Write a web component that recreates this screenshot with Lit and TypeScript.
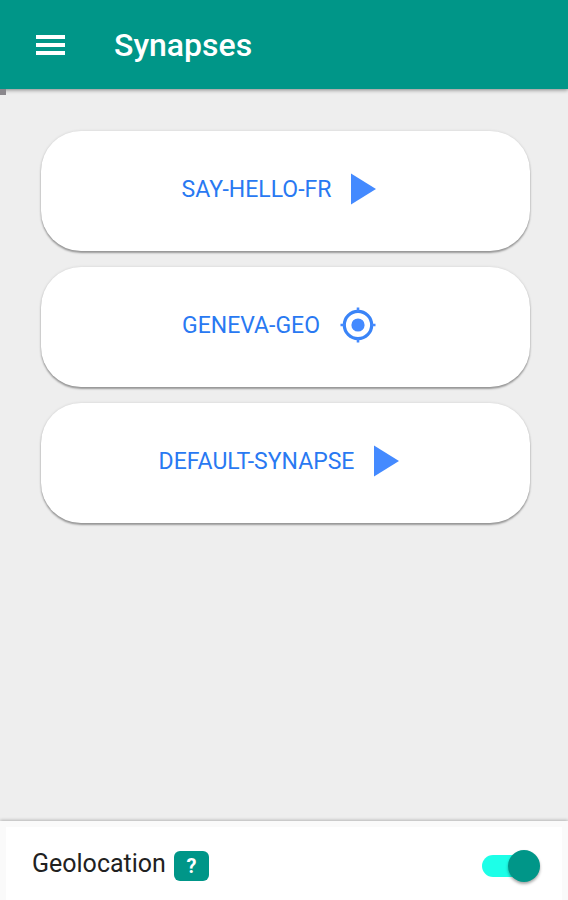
import { LitElement, html, css } from "lit";
import { customElement, state } from "lit/decorators.js";

type Synapse = { name: string; kind: "play" | "locate" };

@customElement("app-root")
export class AppRoot extends LitElement {
  static styles = css`
    :host {
      display: flex;
      flex-direction: column;
      min-height: 100vh;
      background: #eeeeee;
      font-family: Roboto, "Liberation Sans", sans-serif;
      color: #212121;
    }
    button {
      border: 0;
      margin: 0;
      font: inherit;
      cursor: pointer;
    }
    svg {
      display: block;
      fill: currentColor;
    }
    .bar {
      display: flex;
      align-items: center;
      gap: 48px;
      height: 89px;
      padding: 0 36px;
      background: #009688;
      color: #ffffff;
      box-shadow: 0 1px 4px rgba(0, 0, 0, 0.45);
      z-index: 1;
    }
    .menu {
      padding: 0;
      background: none;
      color: inherit;
    }
    h1 {
      margin: 0;
      font-size: 32px;
      line-height: 40px;
      font-weight: 500;
    }
    .handle {
      width: 6px;
      height: 6px;
      background: #8a878c;
      z-index: 2;
    }
    main {
      flex: 1;
    }
    .list {
      display: flex;
      flex-direction: column;
      gap: 16px;
      margin: 0;
      padding: 36px 38px 36px 41px;
      list-style: none;
    }
    .card {
      display: flex;
      align-items: center;
      justify-content: center;
      gap: 20px;
      width: 100%;
      height: 120px;
      padding: 0 13px 4px 0;
      border-radius: 40px;
      background: #ffffff;
      color: #2979f2;
      box-shadow: 0 2px 2px rgba(0, 0, 0, 0.34), 0 0 3px rgba(0, 0, 0, 0.12);
      font-size: 23px;
      line-height: 30px;
    }
    .card span {
      padding-top: 2px;
    }
    .card svg {
      fill: #448aff;
    }
    .footer {
      padding: 6px 6px 0;
      background: #fafafa;
      box-shadow: 0 -1px 3px rgba(0, 0, 0, 0.24);
    }
    .row {
      display: flex;
      align-items: center;
      justify-content: space-between;
      height: 73px;
      padding: 0 22px 0 26px;
      background: #ffffff;
    }
    .name {
      display: flex;
      align-items: center;
      gap: 8px;
      font-size: 25px;
      line-height: 32px;
    }
    .help {
      width: 35px;
      height: 30px;
      margin-top: 5px;
      padding: 0;
      border-radius: 6px;
      background: #009688;
      color: #ffffff;
      font-size: 20px;
      line-height: 28px;
      font-weight: 700;
    }
    .switch {
      appearance: none;
      display: flex;
      align-items: center;
      width: 58px;
      height: 22px;
      margin: 5px 0 0;
      border-radius: 11px;
      background: linear-gradient(#bdbdbd, #bdbdbd) 0 0 / 50px 22px no-repeat;
      cursor: pointer;
    }
    .switch::before {
      content: "";
      width: 32px;
      height: 32px;
      border-radius: 50%;
      background: #fafafa;
      box-shadow: 0 2px 3px rgba(0, 0, 0, 0.35);
    }
    .switch:checked {
      justify-content: flex-end;
      background-image: linear-gradient(#1dffe8, #1dffe8);
    }
    .switch:checked::before {
      background: #009688;
    }
  `;

  @state() private geolocation = true;

  private synapses: Synapse[] = [
    { name: "SAY-HELLO-FR", kind: "play" },
    { name: "GENEVA-GEO", kind: "locate" },
    { name: "DEFAULT-SYNAPSE", kind: "play" },
  ];

  private icon(kind: Synapse["kind"]) {
    return kind === "play"
      ? html`<svg width="25" height="32" viewBox="0 0 25 32" aria-hidden="true">
          <path d="M0 0.5 25 16 0 31.5z" />
        </svg>`
      : html`<svg width="36" height="36" viewBox="0 0 36 36" aria-hidden="true">
          <circle cx="18" cy="18" r="6.6" />
          <circle cx="18" cy="18" r="13.7" fill="none" stroke="#3a84f7" stroke-width="3.2" />
          <path d="M16.7 0.5h2.6v4h-2.6zM16.7 31.5h2.6v4h-2.6zM0.5 16.7h4v2.6h-4zM31.5 16.7h4v2.6h-4z" />
        </svg>`;
  }

  render() {
    return html`
      <header class="bar">
        <button class="menu" aria-label="Menu">
          <svg width="30" height="22" viewBox="0 0 30 22" aria-hidden="true">
            <path d="M0 1h29v4H0zM0 9h29v4H0zM0 17h29v4H0z" />
          </svg>
        </button>
        <h1>Synapses</h1>
      </header>
      <div class="handle"></div>
      <main>
        <ul class="list">
          ${this.synapses.map(
            (s) => html`<li>
              <button class="card"><span>${s.name}</span>${this.icon(s.kind)}</button>
            </li>`
          )}
        </ul>
      </main>
      <footer class="footer">
        <div class="row">
          <div class="name">
            <label for="geo">Geolocation</label>
            <button class="help" aria-label="About geolocation">?</button>
          </div>
          <input
            class="switch"
            id="geo"
            type="checkbox"
            .checked=${this.geolocation}
            @change=${(e: Event) =>
              (this.geolocation = (e.target as HTMLInputElement).checked)}
          />
        </div>
      </footer>
    `;
  }
}
